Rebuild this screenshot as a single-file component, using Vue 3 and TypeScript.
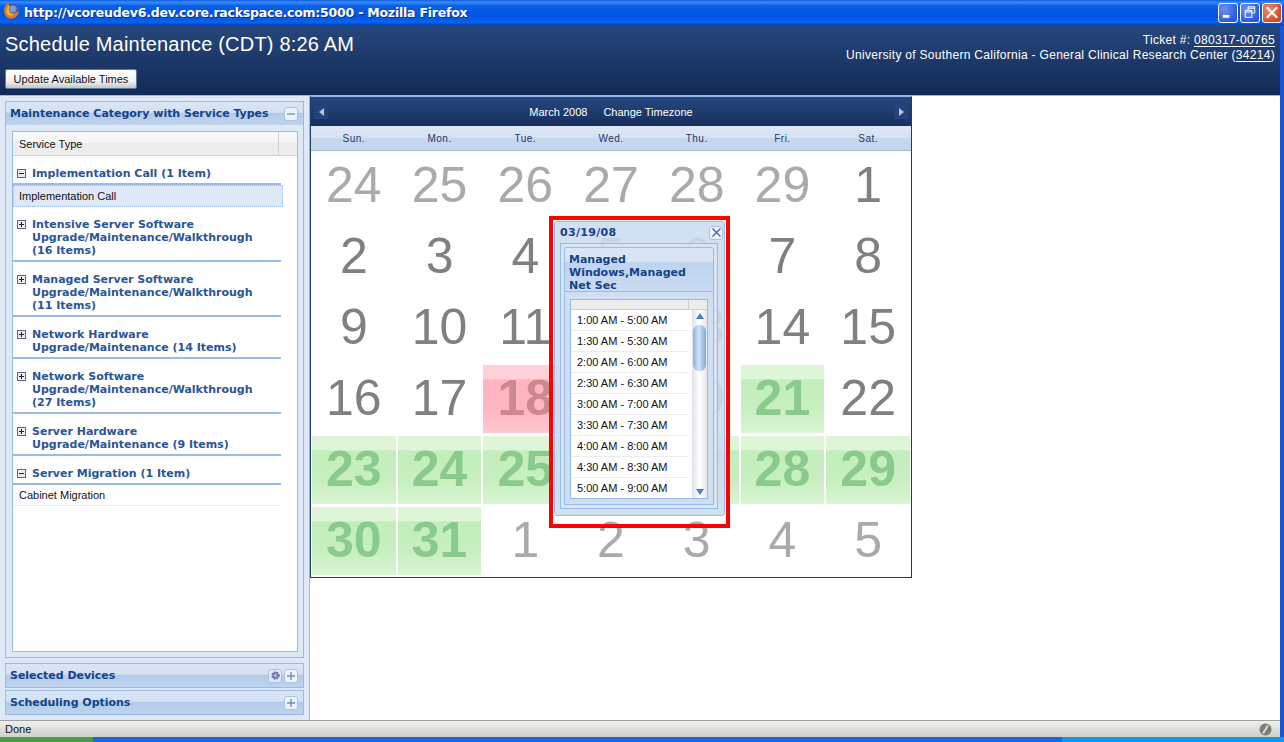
<script setup lang="ts">
interface Group { title: string; open: boolean; rows: string[]; selected?: boolean }
interface Day { n: number; tone: string }

const groups: Group[] = [
  { title: 'Implementation Call (1 Item)', open: true, rows: ['Implementation Call'], selected: true },
  { title: 'Intensive Server Software Upgrade/Maintenance/Walkthrough (16 Items)', open: false, rows: [] },
  { title: 'Managed Server Software Upgrade/Maintenance/Walkthrough (11 Items)', open: false, rows: [] },
  { title: 'Network Hardware Upgrade/Maintenance (14 Items)', open: false, rows: [] },
  { title: 'Network Software Upgrade/Maintenance/Walkthrough (27 Items)', open: false, rows: [] },
  { title: 'Server Hardware Upgrade/Maintenance (9 Items)', open: false, rows: [] },
  { title: 'Server Migration (1 Item)', open: true, rows: ['Cabinet Migration'] },
]

const weekdays = ['Sun.', 'Mon.', 'Tue.', 'Wed.', 'Thu.', 'Fri.', 'Sat.']

const tones: Record<number, string> = { 18: 'red', 21: 'green', 23: 'green', 24: 'green', 25: 'green', 26: 'green', 27: 'green', 28: 'green', 29: 'green', 30: 'green', 31: 'green' }
const days: Day[] = [
  ...[24, 25, 26, 27, 28, 29].map((n) => ({ n, tone: 'other' })),
  ...Array.from({ length: 31 }, (_, i) => ({ n: i + 1, tone: tones[i + 1] ?? 'cur' })),
  ...[1, 2, 3, 4, 5].map((n) => ({ n, tone: 'other' })),
]

const times = [
  '1:00 AM - 5:00 AM', '1:30 AM - 5:30 AM', '2:00 AM - 6:00 AM', '2:30 AM - 6:30 AM', '3:00 AM - 7:00 AM',
  '3:30 AM - 7:30 AM', '4:00 AM - 8:00 AM', '4:30 AM - 8:30 AM', '5:00 AM - 9:00 AM',
]
</script>

<template>
  <div class="win">
    <div class="titlebar">
      <svg class="fox" width="20" height="20" viewBox="0 0 20 20">
        <circle cx="10" cy="10" r="7.5" fill="#3b5fa8" />
        <circle cx="11" cy="8" r="3.5" fill="#7f9ad0" />
        <path d="M3 14 C1 8 3 3 7 2 C6 4 7 5 9 5 C7 6 6 8 7 10 C9 13 13 13 17 10 C16 15 12 18 8 17.5 C6 17.3 4 16 3 14Z" fill="#e8771c" />
        <path d="M5 13 C4 9 5 6 7 4 L7 8 C7 11 9 13 12 14 C9 15 6 15 5 13Z" fill="#f7b52c" />
      </svg>
      <span class="wintitle">http://vcoreudev6.dev.core.rackspace.com:5000 - Mozilla Firefox</span>
      <div class="winbtns">
        <span class="wb"><svg width="19" height="19" viewBox="0 0 19 19"><rect x="4" y="12" width="7" height="3" fill="#fff" /></svg></span>
        <span class="wb"><svg width="19" height="19" viewBox="0 0 19 19" fill="none" stroke="#fff"><path d="M7.5 7 V3.5 H14.5 V10 H11.5" /><path d="M7.5 5 H14.5" /><rect x="4.5" y="7.5" width="7" height="7" /><path d="M4.5 9 H11.5" /></svg></span>
        <span class="wb close"><svg width="19" height="19" viewBox="0 0 19 19" stroke="#fff" stroke-width="2.4"><path d="M4 4 L15 15 M15 4 L4 15" /></svg></span>
      </div>
    </div>

    <div class="body">
      <header class="pagehead">
        <div class="headleft">
          <h1>Schedule Maintenance (CDT) 8:26 AM</h1>
          <button class="update">Update Available Times</button>
        </div>
        <div class="headright">
          <div>Ticket #: <u>080317-00765</u></div>
          <div>University of Southern California - General Clinical Research Center (<u>34214</u>)</div>
        </div>
      </header>

      <div class="main">
        <aside class="side">
          <div class="panel grow">
            <div class="phead">
              <span>Maintenance Category with Service Types</span>
              <span class="tool"><svg width="10" height="10" viewBox="0 0 10 10"><path d="M1 5 H9" stroke="#6f8fbf" stroke-width="1.4" /></svg></span>
            </div>
            <div class="grid">
              <div class="gridhead"><span class="gh1">Service Type</span><span class="gh2"></span></div>
              <div v-for="g in groups" :key="g.title" class="group">
                <div class="gtitle">
                  <svg class="exp" width="9" height="9" viewBox="0 0 9 9">
                    <rect x=".5" y=".5" width="8" height="8" fill="#e8edf5" stroke="#5a6a80" />
                    <path d="M2 4.5 H7" stroke="#222" />
                    <path v-if="!g.open" d="M4.5 2 V7" stroke="#222" />
                  </svg>
                  <span>{{ g.title }}</span>
                </div>
                <div v-for="r in g.rows" :key="r" class="grow-row" :class="{ sel: g.selected }">{{ r }}</div>
              </div>
            </div>
          </div>
          <div class="panel">
            <div class="phead">
              <span>Selected Devices</span>
              <span class="tool gear"><svg width="11" height="11" viewBox="0 0 11 11"><circle cx="5.5" cy="5.5" r="3.2" fill="#7d8cc0" stroke="#5f6ea8" stroke-width="2" stroke-dasharray="1.6 1" /><circle cx="5.5" cy="5.5" r="1.2" fill="#c6cde8" /></svg></span>
              <span class="tool"><svg width="10" height="10" viewBox="0 0 10 10"><path d="M1 5 H9 M5 1 V9" stroke="#6f8fbf" stroke-width="1.4" /></svg></span>
            </div>
          </div>
          <div class="panel">
            <div class="phead">
              <span>Scheduling Options</span>
              <span class="tool"><svg width="10" height="10" viewBox="0 0 10 10"><path d="M1 5 H9 M5 1 V9" stroke="#6f8fbf" stroke-width="1.4" /></svg></span>
            </div>
          </div>
        </aside>

        <section class="content">
          <div class="cal">
            <div class="calhead">
              <span class="nav"><i class="tri left"></i></span>
              <div class="caltitle"><span>March 2008</span><span>Change Timezone</span></div>
              <span class="nav"><i class="tri right"></i></span>
            </div>
            <div class="weekdays"><span v-for="w in weekdays" :key="w">{{ w }}</span></div>
            <div class="days">
              <div v-for="(d, i) in days" :key="i" class="day" :class="d.tone">{{ d.n }}</div>
            </div>
          </div>

          <div class="popup">
            <div class="pwin">
              <div class="pwhead">
                <span>03/19/08</span>
                <span class="tool x"><svg width="11" height="11" viewBox="0 0 11 11"><path d="M1.5 1.5 L9.5 9.5 M9.5 1.5 L1.5 9.5" stroke="#4a68a8" stroke-width="1.4" /></svg></span>
              </div>
              <div class="pinner">
                <div class="pihead">Managed Windows,Managed Net Sec</div>
                <div class="pibody">
                  <div class="plist">
                    <div class="plhead"><span></span><span class="plh2"></span></div>
                    <div class="plrows">
                      <div class="rows">
                        <div v-for="t in times" :key="t" class="trow">{{ t }}</div>
                      </div>
                      <div class="sbar">
                        <i class="tri up"></i>
                        <div class="thumb"></div>
                        <i class="tri down"></i>
                      </div>
                    </div>
                  </div>
                </div>
              </div>
            </div>
          </div>
        </section>
      </div>

      <footer class="status">
        <span>Done</span>
        <svg width="13" height="13" viewBox="0 0 13 13"><circle cx="6.5" cy="6.5" r="6" fill="#7c7c7c" /><path d="M4 10.5 L9 2.5" stroke="#d8d8d8" stroke-width="2" /></svg>
      </footer>
    </div>
    <div class="taskbar"><span class="start"></span><span class="tasks"></span><span class="tray"></span></div>
  </div>
</template>

<style>
html, body { margin: 0; background: #fff; }
</style>

<style scoped>
.win { width: 1284px; height: 742px; overflow: hidden; display: flex; flex-direction: column; font-family: "Liberation Sans", Arial, sans-serif; background: #fff; }

.titlebar { height: 26px; flex: none; display: flex; align-items: center; padding: 0 2px 1px 2px; box-sizing: border-box; color: #fff; background: linear-gradient(#0a5ae0 0%, #3b8cf8 8%, #0a5fe6 22%, #0055e5 60%, #0a62ee 85%, #0040b8 100%); }
.fox { flex: none; margin-top: -3px; }
.wintitle { margin-left: 2px; font: bold 12.5px "DejaVu Sans", sans-serif; letter-spacing: -.22px; white-space: nowrap; text-shadow: 1px 1px 0 #0a2f90; }
.winbtns { margin-left: auto; display: flex; gap: 2px; }
.wb { width: 20px; height: 20px; box-sizing: border-box; border: 1px solid #fff; border-radius: 3px; background: radial-gradient(circle at 30% 30%, #6d93ef, #2a58d8 75%); display: flex; align-items: center; justify-content: center; }
.wb.close { background: radial-gradient(circle at 30% 30%, #ee8d68, #d8451d 75%); }

.body { flex: 1; min-height: 0; display: flex; flex-direction: column; margin-right: 4px; border-right: 0; box-shadow: 4px 0 0 #1a55d8; }

.pagehead { height: 70px; flex: none; display: flex; justify-content: space-between; box-sizing: border-box; color: #fff; background: linear-gradient(#26477c, #132a57); border-bottom: 1px solid #97b8e6; }
.headleft { padding: 6px 0 0 5px; }
h1 { margin: 0; font: 400 20px/24px "Liberation Sans", sans-serif; letter-spacing: .2px; white-space: nowrap; }
.update { display: block; margin-top: 13px; width: 132px; height: 20px; padding: 0; border: 1px solid #5a7c9c; border-radius: 2px; background: linear-gradient(#fff, #f4f4f4 60%, #c6c6c6); font: 11px "Liberation Sans", sans-serif; color: #111; }
.headright { padding: 7px 5px 0 0; text-align: right; font-size: 12px; line-height: 15px; letter-spacing: .3px; }
u { text-underline-offset: 2px; }

.main { flex: 1; min-height: 0; display: flex; }
.side { width: 310px; flex: none; box-sizing: border-box; padding: 5px 5px 5px 5px; background: #dfe8f6; border-right: 1px solid #97b8e6; display: flex; flex-direction: column; gap: 2px; }
.panel { border: 1px solid #99bbe8; box-sizing: border-box; flex: none; }
.panel.grow { flex: 1; min-height: 0; display: flex; flex-direction: column; background: #dfe8f6; margin-bottom: 3px; }
.phead { height: 23px; flex: none; display: flex; align-items: center; gap: 2px; padding: 0 5px 0 4px; font: bold 11px "DejaVu Sans", sans-serif; color: #15428b; background: linear-gradient(#dae6f5 0, #d3e1f3 45%, #b2cbea 48%, #bed3ec 100%); }
.phead > span:first-child { margin-right: auto; letter-spacing: -.02px; }
.tool { width: 14px; height: 14px; box-sizing: border-box; border: 1px solid #a9c2e4; border-radius: 3px; background: #eef4fc; display: flex; align-items: center; justify-content: center; }
.tool.gear { background: #e4e8f6; }

.grid { flex: 1; min-height: 0; margin: 6px 5px 5px 6px; border: 1px solid #99bbe8; background: #fff; overflow: hidden; }
.gridhead { height: 24px; display: flex; box-sizing: border-box; border-bottom: 1px solid #d0d0d0; background: linear-gradient(#f8f8f8 0, #f6f6f6 45%, #ececec 50%, #eee 100%); font-size: 11px; color: #111; }
.gh1 { flex: 1; line-height: 24px; padding-left: 6px; border-right: 1px solid #d0d0d0; }
.gh2 { width: 18px; }
.group { width: 268px; }
.gtitle { display: flex; gap: 6px; padding: 11px 6px 3px 4px; font: bold 11px/13px "DejaVu Sans", sans-serif; color: #2a5596; border-bottom: 2px solid #99bbe8; }
.gtitle > span { flex: 1; }
.exp { flex: none; margin-top: 2px; }
.grow-row { height: 20px; line-height: 20px; padding-left: 6px; font-size: 11px; color: #111; border-bottom: 1px solid #ededed; box-sizing: content-box; }
.grow-row.sel { height: 20px; width: 262px; background: #dfe8f6; border: 1px dotted #99bbe8; padding-left: 5px; width: 263px; }

.content { position: relative; flex: 1; min-width: 0; background: #fff; }
.cal { width: 602px; height: 482px; margin-top: 0; box-sizing: border-box; border: 1px solid #1b3a6f; border-top-color: #97b8e6; display: flex; flex-direction: column; }
.calhead { height: 29px; flex: none; display: flex; align-items: center; justify-content: space-between; padding: 0 3px; background: linear-gradient(#25477e, #182f5f); color: #fff; }
.caltitle { display: flex; gap: 16px; font-size: 11px; padding-right: 0; }
.nav { width: 14px; height: 14px; display: flex; align-items: center; justify-content: center; background: #24427c; }
.tri { display: block; width: 0; height: 0; border-style: solid; border-color: transparent; }
.tri.left { border-width: 4px 5px 4px 0; border-right-color: #b8c4d8; }
.tri.right { border-width: 4px 0 4px 5px; border-left-color: #b8c4d8; }
.weekdays { height: 25px; flex: none; display: grid; grid-template-columns: repeat(7, 1fr); align-items: center; text-align: center; font-size: 10px; letter-spacing: .5px; color: #1d3a70; background: linear-gradient(#dce7f5 0, #d6e3f3 45%, #c6d7ec 55%, #c6d7ec 100%); border-bottom: 1px solid #a4bcd8; box-sizing: border-box; }
.days { flex: 1; min-height: 0; display: grid; grid-template-columns: repeat(7, 1fr); grid-template-rows: repeat(6, 1fr); gap: 3px 2px; padding: 0 1px 2px 1px; margin-top: 1px; }
.day { display: flex; align-items: center; justify-content: center; font-size: 50px; line-height: 1; padding-bottom: 2px; box-sizing: border-box; }
.day.other { color: #aaa; }
.day.cur { color: #808080; }
.day.green { font-weight: 700; color: #8bca8d; background: linear-gradient(#def5d8 0, #def5d8 20%, #c2eebb 22%, #c7efc0 65%, #d9f5d2 100%); }
.day.red { font-weight: 700; color: #cc8a8e; background: linear-gradient(#ffd0d8 0, #ffd0d8 20%, #ffb4c0 22%, #ffb6c2 65%, #ffc8d2 100%); }

.popup { position: absolute; left: 239px; top: 120px; width: 181px; height: 312px; box-sizing: border-box; border: 4px solid #f00; padding: 1px 1px 8px 1px; }
.pwin { height: 100%; box-sizing: border-box; border: 1px solid #99bbe8; border-radius: 3px; background: rgba(205, 221, 242, .9); padding: 0 6px 6px 5px; display: flex; flex-direction: column; }
.pwhead { height: 21px; flex: none; display: flex; align-items: center; justify-content: space-between; margin: 0 -5px 0 0; padding-right: 0; font: bold 11px "DejaVu Sans", sans-serif; color: #15428b; }
.pwhead > span:first-child { letter-spacing: .3px; }
.tool.x { margin-right: 0; }
.pinner { flex: 1; min-height: 0; border: 1px solid #99bbe8; padding: 3px; display: flex; flex-direction: column; background: rgba(223, 232, 246, .55); }
.pihead { flex: none; height: 45px; box-sizing: border-box; padding: 5px 4px 0 4px; font: bold 11px/13px "DejaVu Sans", sans-serif; color: #15428b; background: linear-gradient(#dbe7f6 0, #d6e4f5 32%, #bed3ee 34%, #cbdcf2 100%); border: 1px solid #99bbe8; border-top-left-radius: 3px; border-top-right-radius: 3px; }
.pibody { flex: 1; min-height: 0; padding: 7px 5px 5px 5px; border: 1px solid #99bbe8; border-top: 0; background: #cfdef2; }
.plist { height: 100%; box-sizing: border-box; border: 1px solid #99bbe8; background: #fff; display: flex; flex-direction: column; overflow: hidden; }
.plhead { height: 9px; flex: none; display: flex; background: #ececec; border-bottom: 1px solid #d0d0d0; }
.plhead > span:first-child { flex: 1; border-right: 1px solid #d0d0d0; }
.plh2 { width: 18px; }
.plrows { flex: 1; min-height: 0; display: flex; }
.rows { flex: 1; min-width: 0; overflow: hidden; }
.trow { height: 20px; line-height: 20px; padding-left: 6px; border-bottom: 1px solid #ededed; font-size: 11px; color: #111; white-space: nowrap; }
.sbar { width: 15px; flex: none; margin-left: 3px; background: linear-gradient(90deg, #dfe3ea, #fff 50%, #e6e6e6); display: flex; flex-direction: column; align-items: center; padding: 3px 0; box-sizing: border-box; position: relative; }
.tri.up { border-width: 0 4px 6px 4px; border-bottom-color: #4a7fc8; }
.tri.down { border-width: 6px 4px 0 4px; border-top-color: #4a7fc8; margin-top: auto; }
.thumb { margin-top: 6px; width: 13px; height: 46px; border-radius: 6px; background: linear-gradient(90deg, #8db2dc, #d0e2f6 45%, #82a9d6); }

.status { height: 17px; flex: none; display: flex; align-items: center; justify-content: space-between; padding: 0 8px 0 5px; font-size: 11px; color: #111; background: linear-gradient(#f0efea, #cfcfcb); border-top: 1px solid #a0a0a0; box-sizing: border-box; }
.taskbar { height: 5px; flex: none; display: flex; background: #1b6ae0; }
.start { width: 93px; background: #47a047; }
.tasks { flex: 1; }
.tray { width: 222px; background: #1298e8; }
</style>
